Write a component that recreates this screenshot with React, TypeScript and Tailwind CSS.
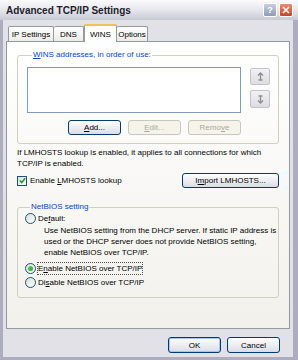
import React from 'react';

function XpButton({
	children,
	className = '',
	disabled = false,
	isDefault = false,
}: {
	children: React.ReactNode;
	className?: string;
	disabled?: boolean;
	isDefault?: boolean;
}) {
	const base = disabled
		? 'border-[#c9c7ba] bg-[#f5f4ea] text-[#aca899]'
		: 'border-[#003c74] bg-gradient-to-b from-white to-[#dcdce6] text-black';
	const glow = isDefault ? 'shadow-[inset_0_0_0_1px_#a8c4f0]' : '';
	return (
		<div
			className={`flex items-center justify-center rounded-[3px] border ${base} ${glow} ${className}`}
		>
			{children}
		</div>
	);
}

function ArrowButton({ down = false }: { down?: boolean }) {
	return (
		<div className="flex h-full w-[20px] items-center justify-center rounded-[2px] border border-[#c4c3cc] bg-gradient-to-b from-[#f2f2f4] to-[#dcdce2]">
			<svg width="7" height="9" viewBox="0 0 7 9" className={down ? 'rotate-180' : ''}>
				<path d="M3.5 1 L3.5 8 M1 3.5 L3.5 1 L6 3.5 M1.5 8 L5.5 8" stroke="#8e8e8e" strokeWidth="1.3" fill="none" />
			</svg>
		</div>
	);
}

function Radio({ checked = false }: { checked?: boolean }) {
	return (
		<div className="flex h-[11px] w-[11px] shrink-0 items-center justify-center rounded-full border border-[#1c5180] bg-gradient-to-br from-[#dcdcd7] to-white">
			{checked && (
				<div className="h-[5px] w-[5px] rounded-full bg-gradient-to-br from-[#55d35b] to-[#21a121]" />
			)}
		</div>
	);
}

function GroupBox({
	title,
	className = '',
	children,
}: {
	title: React.ReactNode;
	className?: string;
	children: React.ReactNode;
}) {
	return (
		<fieldset className={`rounded-[3px] border border-[#d0d0bf] ${className}`}>
			<legend className="ml-[5px] px-[1px] leading-[10px] text-[#0046d5]">{title}</legend>
			{children}
		</fieldset>
	);
}

export default function App() {
	return (
		<div className="flex h-[360px] w-[298px] flex-col overflow-hidden bg-[#b9b8c8] font-['Liberation_Sans',Arial,sans-serif] text-[8px] leading-[11px] text-black">
			{/* title bar */}
			<div className="flex h-[20px] shrink-0 items-center bg-gradient-to-b from-[#fbfbfd] via-[#e6e6ee] to-[#c9c9d5] pl-[6px] pr-[5px]">
				<span className="text-[10px] font-bold text-[#1e1e2a]">Advanced TCP/IP Settings</span>
				<div className="ml-auto flex gap-[2px]">
					<div className="flex h-[14px] w-[14px] items-center justify-center rounded-[2px] border border-white bg-gradient-to-b from-[#c6cfe0] to-[#8f9cb8] text-[9px] font-bold text-white">
						?
					</div>
					<div className="flex h-[14px] w-[14px] items-center justify-center rounded-[2px] border border-white bg-gradient-to-b from-[#ee8a6c] to-[#c9422a]">
						<svg width="8" height="8" viewBox="0 0 8 8">
							<path d="M1 1 L7 7 M7 1 L1 7" stroke="white" strokeWidth="1.6" />
						</svg>
					</div>
				</div>
			</div>

			{/* body */}
			<div className="flex flex-1 flex-col border-b-[3px] border-l-[3px] border-r-[5px] border-[#aeadbf] bg-[#e2e1e7] px-[3px] pt-[4px]">
				{/* tabs */}
				<div className="flex h-[17px] items-end pl-[2px]">
					<div className="flex h-[15px] w-[46px] items-center justify-center rounded-t-[2px] border border-b-0 border-[#919b9c] bg-gradient-to-b from-white to-[#ecebe6]">
						IP Settings
					</div>
					<div className="flex h-[15px] w-[30px] items-center justify-center rounded-t-[2px] border border-b-0 border-l-0 border-[#919b9c] bg-gradient-to-b from-white to-[#ecebe6]">
						DNS
					</div>
					<div className="relative z-10 -mb-px flex h-[18px] w-[33px] items-center justify-center rounded-t-[2px] border border-b-0 border-t-2 border-[#919b9c] border-t-[#f3c15c] bg-white">
						WINS
					</div>
					<div className="flex h-[15px] w-[31px] items-center justify-center rounded-t-[2px] border border-b-0 border-l-0 border-[#919b9c] bg-gradient-to-b from-white to-[#ecebe6]">
						Options
					</div>
				</div>

				{/* tab page */}
				<div className="flex h-[288px] flex-col border border-[#919b9c] bg-gradient-to-b from-white to-[#f2f1ec] px-[10px]">
					<GroupBox
						className="mt-[8px] pb-[8px] pl-[9px]"
						title={
							<>
								<u>W</u>INS addresses, in order of use:
							</>
						}
					>
						<div className="mt-[7px] flex gap-[9px]">
							<div className="flex w-[214px] flex-col">
								<div className="h-[46px] border border-[#7f9db9] bg-white" />
								<div className="mt-[7px] flex justify-end gap-[7px]">
									<XpButton className="h-[15px] w-[53px]">
										<span>
											<u>A</u>dd...
										</span>
									</XpButton>
									<XpButton className="h-[15px] w-[53px]" disabled>
										<span>
											<u>E</u>dit...
										</span>
									</XpButton>
									<XpButton className="h-[15px] w-[53px]" disabled>
										<span>
											Remo<u>v</u>e
										</span>
									</XpButton>
								</div>
							</div>
							<div className="mt-px flex flex-col gap-[5px]">
								<div className="h-[17px]">
									<ArrowButton />
								</div>
								<div className="h-[18px]">
									<ArrowButton down />
								</div>
							</div>
						</div>
					</GroupBox>

					<p className="mt-[3px]">
						If LMHOSTS lookup is enabled, it applies to all connections for which
						<br />
						TCP/IP is enabled.
					</p>

					<div className="mt-[4px] flex h-[15px] items-center">
						<div className="flex h-[10px] w-[10px] items-center justify-center border border-[#1c5180] bg-gradient-to-br from-[#dcdcd7] to-white">
							<svg width="7" height="7" viewBox="0 0 7 7">
								<path d="M0.8 3.5 L2.8 5.5 L6.2 1.2" stroke="#21a121" strokeWidth="1.6" fill="none" />
							</svg>
						</div>
						<span className="ml-[3px]">
							Enable <u>L</u>MHOSTS lookup
						</span>
						<XpButton className="ml-auto h-[15px] w-[97px]">
							<span>
								I<u>m</u>port LMHOSTS...
							</span>
						</XpButton>
					</div>

					<GroupBox className="mt-[14px] pb-[9px] pl-[7px]" title="NetBIOS setting">
						<div className="mt-px flex items-center gap-[2px]">
							<Radio />
							<span>
								De<u>f</u>ault:
							</span>
						</div>
						<p className="ml-[19px] mt-[1px]">
							Use NetBIOS setting from the DHCP server. If static IP address is
							<br />
							used or the DHCP server does not provide NetBIOS setting,
							<br />
							enable NetBIOS over TCP/IP.
						</p>
						<div className="mt-[5px] flex items-center gap-[2px]">
							<Radio checked />
							<span className="outline-dotted outline-1 outline-[#555]">
								E<u>n</u>able NetBIOS over TCP/IP
							</span>
						</div>
						<div className="mt-[3px] flex items-center gap-[2px]">
							<Radio />
							<span>
								Di<u>s</u>able NetBIOS over TCP/IP
							</span>
						</div>
					</GroupBox>
				</div>

				{/* dialog buttons */}
				<div className="mt-[8px] flex justify-end gap-[6px] pr-[10px]">
					<XpButton className="h-[16px] w-[53px]" isDefault>
						OK
					</XpButton>
					<XpButton className="h-[16px] w-[53px]">Cancel</XpButton>
				</div>
			</div>
		</div>
	);
}
